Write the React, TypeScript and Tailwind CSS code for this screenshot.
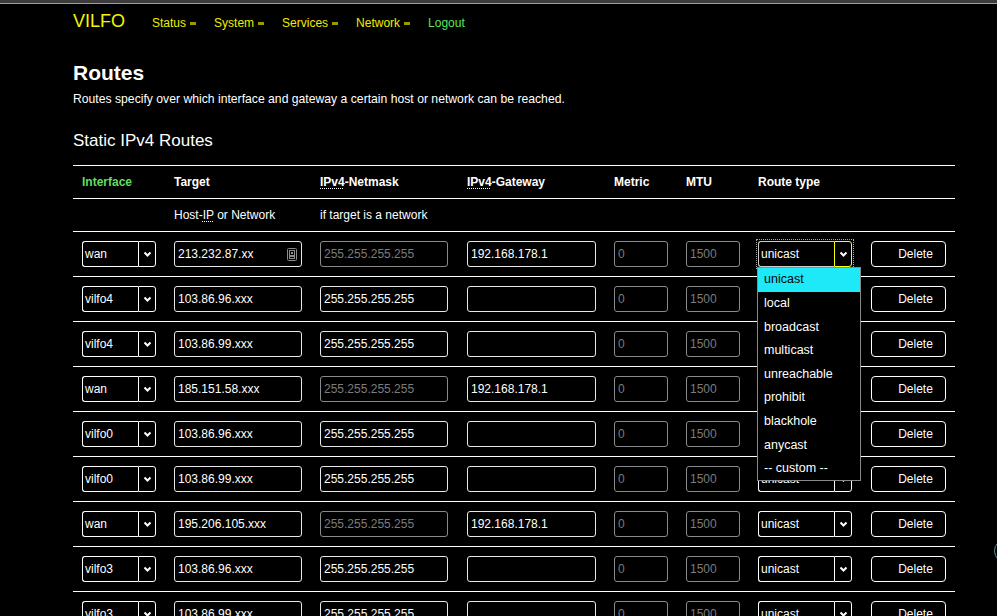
import React from "react";

type Row = {
  iface: string;
  target: string;
  mask: string;
  maskDisabled: boolean;
  gw: string;
  icon?: boolean;
  focused?: boolean;
};

const rows: Row[] = [
  { iface: "wan", target: "213.232.87.xx", mask: "255.255.255.255", maskDisabled: true, gw: "192.168.178.1", icon: true, focused: true },
  { iface: "vilfo4", target: "103.86.96.xxx", mask: "255.255.255.255", maskDisabled: false, gw: "" },
  { iface: "vilfo4", target: "103.86.99.xxx", mask: "255.255.255.255", maskDisabled: false, gw: "" },
  { iface: "wan", target: "185.151.58.xxx", mask: "255.255.255.255", maskDisabled: true, gw: "192.168.178.1" },
  { iface: "vilfo0", target: "103.86.96.xxx", mask: "255.255.255.255", maskDisabled: false, gw: "" },
  { iface: "vilfo0", target: "103.86.99.xxx", mask: "255.255.255.255", maskDisabled: false, gw: "" },
  { iface: "wan", target: "195.206.105.xxx", mask: "255.255.255.255", maskDisabled: true, gw: "192.168.178.1" },
  { iface: "vilfo3", target: "103.86.96.xxx", mask: "255.255.255.255", maskDisabled: false, gw: "" },
  { iface: "vilfo3", target: "103.86.99.xxx", mask: "255.255.255.255", maskDisabled: false, gw: "" },
];

const options = ["unicast", "local", "broadcast", "multicast", "unreachable", "prohibit", "blackhole", "anycast", "-- custom --"];

function Chevron() {
  return (
    <svg width="9" height="7" viewBox="0 0 9 7">
      <polyline points="1.5,1.5 4.5,4.5 7.5,1.5" fill="none" stroke="white" strokeWidth="2" />
    </svg>
  );
}

function Select({ value, width, focused }: { value: string; width: string; focused?: boolean }) {
  return (
    <div className={`${width} h-[26px] flex ${focused ? "outline outline-1 outline-dotted outline-[#aaa] outline-offset-[1px]" : ""}`}>
      <div className={`flex-1 h-full border ${focused ? "border-[#ccc]" : "border-white"} rounded-l-[3px] border-r-0 flex items-center pl-[2px] text-[12px] text-white`}>
        {value}
      </div>
      <div className={`w-[18px] h-full border ${focused ? "border-[#ffff00]" : "border-white"} rounded-r-[3px] flex items-center justify-center`}>
        <Chevron />
      </div>
    </div>
  );
}

function Input({ value, width, disabled, icon }: { value: string; width: string; disabled?: boolean; icon?: boolean }) {
  return (
    <div
      className={`${width} h-[26px] rounded-[3px] border ${disabled ? "border-[#8a8a8a] text-[#7c7c7c]" : "border-[#e8e8e8] text-white"} flex items-center pl-[3px] pr-[4px] text-[12px]`}
    >
      <span className="flex-1">{value}</span>
      {icon && (
        <svg width="10" height="13" viewBox="0 0 10 13">
          <rect x="0.5" y="0.5" width="9" height="12" rx="1" fill="none" stroke="#8a8a8a" />
          <rect x="2.5" y="2.5" width="5" height="8" fill="none" stroke="#8a8a8a" />
          <rect x="4" y="4" width="2" height="2" fill="#8a8a8a" />
          <rect x="3" y="7" width="4" height="2" fill="#8a8a8a" />
        </svg>
      )}
    </div>
  );
}

const cellW = ["w-[92px]", "w-[146px]", "w-[147px]", "w-[147px]", "w-[72px]", "w-[72px]", "w-[113px]", "w-[93px]"];

function NavItem({ label, dash = true, green }: { label: string; dash?: boolean; green?: boolean }) {
  return (
    <span className={`flex items-center ${green ? "text-[#5ee35e]" : "text-[#eeee00]"}`}>
      {label}
      {dash && <span className="ml-[4px] w-[6px] h-[3px] bg-[#9a9a00] inline-block" />}
    </span>
  );
}

function Abbr({ children }: { children: React.ReactNode }) {
  return <span className="underline decoration-dotted decoration-1 underline-offset-[2px]">{children}</span>;
}

export default function App() {
  return (
    <div className="relative w-[997px] h-[616px] overflow-hidden bg-black text-white font-['Liberation_Sans',Arial,sans-serif]">
      <div className="h-[3px] bg-[#3c3c3c]" />
      <div className="h-px bg-[#9c9c9c]" />
      <div className="px-[73px]">
        <div className="flex items-end pt-[3px] h-[28px]">
          <span className="text-[18px] leading-[21px] text-[#f5f500]">VILFO</span>
          <div className="flex items-center gap-[18px] ml-[27px] text-[12px] leading-[15px] pb-[1px]">
            <NavItem label="Status" />
            <NavItem label="System" />
            <NavItem label="Services" />
            <NavItem label="Network" />
            <NavItem label="Logout" dash={false} green />
          </div>
        </div>
        <h1 className="mt-[28px] text-[21px] leading-[26px] font-bold">Routes</h1>
        <p className="mt-[5px] text-[12.2px] leading-[16px]">
          Routes specify over which interface and gateway a certain host or network can be reached.
        </p>
        <h2 className="mt-[24px] text-[17px] leading-[20px]">Static IPv4 Routes</h2>

        <div className="mt-[14px] w-[882px]">
          <div className="flex h-[33px] border-t border-white items-center text-[12px] font-bold">
            <div className={`${cellW[0]} pl-[9px] text-[#62dd62]`}>Interface</div>
            <div className={`${cellW[1]} pl-[9px]`}>Target</div>
            <div className={`${cellW[2]} pl-[9px]`}><Abbr>IPv4</Abbr>-Netmask</div>
            <div className={`${cellW[3]} pl-[9px]`}><Abbr>IPv4</Abbr>-Gateway</div>
            <div className={`${cellW[4]} pl-[9px]`}>Metric</div>
            <div className={`${cellW[5]} pl-[9px]`}>MTU</div>
            <div className={`${cellW[6]} pl-[9px]`}>Route type</div>
            <div className={`${cellW[7]} pl-[9px]`} />
          </div>
          <div className="flex h-[33px] border-t border-white items-center text-[12px]">
            <div className={`${cellW[0]} pl-[9px]`} />
            <div className={`${cellW[1]} pl-[9px]`}>Host-<Abbr>IP</Abbr> or Network</div>
            <div className={`${cellW[2]} pl-[9px]`}>if target is a network</div>
          </div>
          {rows.map((r, i) => (
            <div key={i} className="flex h-[45px] border-t border-white items-center">
              <div className={`${cellW[0]} pl-[9px]`}>
                <Select value={r.iface} width="w-[74px]" />
              </div>
              <div className={`${cellW[1]} pl-[9px]`}>
                <Input value={r.target} width="w-[128px]" icon={r.icon} />
              </div>
              <div className={`${cellW[2]} pl-[9px]`}>
                <Input value={r.mask} width="w-[128px]" disabled={r.maskDisabled} />
              </div>
              <div className={`${cellW[3]} pl-[9px]`}>
                <Input value={r.gw} width="w-[129px]" />
              </div>
              <div className={`${cellW[4]} pl-[9px]`}>
                <Input value="0" width="w-[54px]" disabled />
              </div>
              <div className={`${cellW[5]} pl-[9px]`}>
                <Input value="1500" width="w-[54px]" disabled />
              </div>
              <div className={`${cellW[6]} pl-[9px]`}>
                <Select value="unicast" width="w-[94px]" focused={r.focused} />
              </div>
              <div className={`${cellW[7]} pl-[9px]`}>
                <button className="w-[75px] h-[26px] border border-white rounded-[4px] text-[12px] text-white pl-[14px] pb-[1px] flex items-center justify-center">
                  Delete
                </button>
              </div>
            </div>
          ))}
        </div>
      </div>

      <div className="absolute left-[757px] top-[267px] w-[104px] border border-[#8a8a8a] bg-black text-[12.5px]">
        {options.map((o, i) => (
          <div
            key={o}
            className={`h-[23.6px] flex items-center pl-[6px] ${i === 0 ? "bg-[#1de9f8] text-black" : "text-white"}`}
          >
            {o}
          </div>
        ))}
      </div>

      <div className="absolute left-[994px] top-[539px] w-[24px] h-[24px] rounded-full border border-[#4f8fa0]" />
    </div>
  );
}
